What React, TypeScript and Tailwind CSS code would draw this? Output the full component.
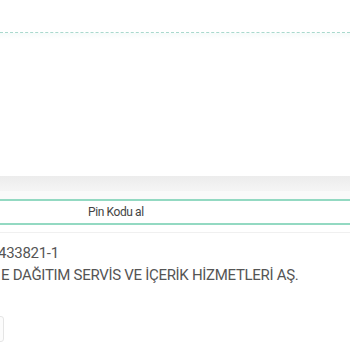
export default function App() {
  return (
    <div className="w-[350px] h-[350px] overflow-hidden bg-white relative" style={{ fontFamily: "Roboto, 'Liberation Sans', sans-serif" }}>
      <div className="h-[32px]" />
      <div className="border-t border-dashed border-[#a9d9cd]" />
      <div className="h-[6px] bg-gradient-to-b from-[#f6fbfa] to-white" />
      <div className="h-[137px]" />
      <div className="h-[15px] bg-gradient-to-b from-[#ececec] to-[#f5f5f5]" />
      <div className="h-[8px] bg-[#fafafa]" />
      <div className="h-[26px] border-y-2 border-[#93d9c2] flex items-center pl-[88px] text-[12px] tracking-[-0.4px] text-[#444]">
        Pin Kodu al
      </div>
      <div className="h-[8px] border-b border-[#f0f0f0]" />
      <div className="mt-[9px] text-[15px] leading-[22px] tracking-[-0.3px] text-[#555] whitespace-nowrap">
        <div className="ml-[-2px]">433821-1</div>
        <div className="ml-[1px]">E DAĞITIM SERVİS VE İÇERİK HİZMETLERİ AŞ.</div>
      </div>
      <div className="mt-[30px] ml-[-10px] w-[14px] h-[26px] border border-[#e5e5e5] rounded-[3px] bg-[#fcfcfc]" />
    </div>
  );
}
